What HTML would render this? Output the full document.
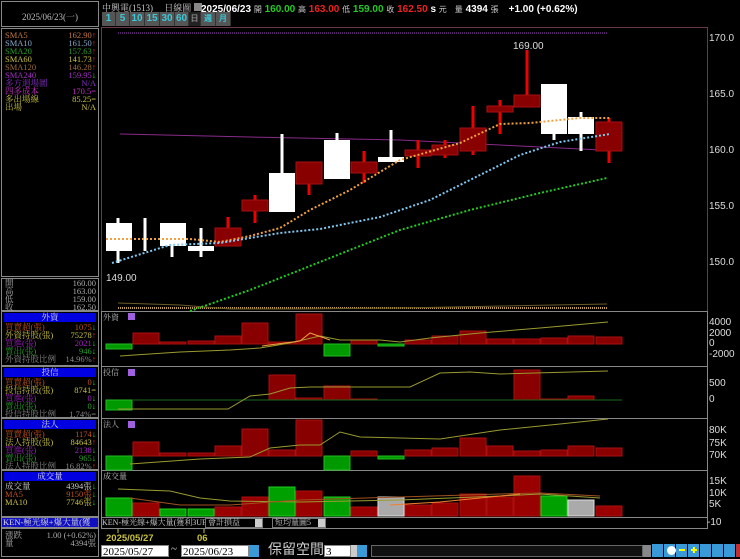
<!DOCTYPE html>
<html><head><meta charset="utf-8">
<style>
*{margin:0;padding:0;box-sizing:border-box}
body{width:740px;height:557px;background:#000;overflow:hidden;position:relative;font-family:"Liberation Serif","Noto Serif CJK SC","Noto Sans CJK TC",serif;font-size:9px;color:#ccc}
.a{position:absolute;white-space:nowrap}
.lp{position:absolute;left:1px;width:98px;border:1px solid #888}
.row{position:absolute;left:3px;right:2px;height:8px;line-height:8px;font-size:8.5px}
.row span{position:absolute;right:0}
.hd{position:absolute;left:2px;right:2px;height:9px;background:#0000e0;color:#ddd;text-align:center;line-height:9px;font-size:8.5px}
.b{position:absolute;top:12px;height:14px;background:#555;color:#3cc8d8;font:bold 10px "Liberation Sans",sans-serif;text-align:center;line-height:14px;border-right:1px solid #333}
.ax{position:absolute;left:709px;font:10px "Liberation Sans",sans-serif;color:#ddd;line-height:10px}
.s{font-family:"Liberation Sans",sans-serif}
.in{position:absolute;top:545px;height:12px;background:#fff;color:#000;font-size:11px;line-height:12px;padding-left:1px;border:1px solid #888}
.ic{position:absolute;top:544px;width:11px;height:13px;background:#3a9ad8}
</style></head><body>

<div class="lp" style="top:1px;height:26px;background:#000"><div class="a" style="left:20px;top:8px;color:#bbb">2025/06/23(一)</div></div>
<div class="lp" style="top:28px;height:249px">
<div class="row" style="top:2px;color:#c07a40">SMA5<span>162.90<b style="color:#f22">↑</b></span></div>
<div class="row" style="top:10px;color:#88aacc">SMA10<span>161.50<b style="color:#f22">↑</b></span></div>
<div class="row" style="top:18px;color:#2a9a2a">SMA20<span>157.63<b style="color:#f22">↑</b></span></div>
<div class="row" style="top:26px;color:#c8c040">SMA60<span>141.73<b style="color:#f22">↑</b></span></div>
<div class="row" style="top:34px;color:#9a6a3a">SMA120<span>146.28<b style="color:#f22">↑</b></span></div>
<div class="row" style="top:42px;color:#a030c0">SMA240<span>159.95<b style="color:#2d2">↓</b></span></div>
<div class="row" style="top:50px;color:#8030c0">多方迴場圖<span>N/A</span></div>
<div class="row" style="top:58px;color:#c030c0">四多成本<span>170.5=</span></div>
<div class="row" style="top:66px;color:#c8c040">多出場線<span>85.25=</span></div>
<div class="row" style="top:74px;color:#c8c040">出場<span>N/A</span></div>
</div>
<div class="lp" style="top:278px;height:33px;color:#aaa">
<div class="row" style="top:0">開<span>160.00</span></div>
<div class="row" style="top:8px">高<span>163.00</span></div>
<div class="row" style="top:16px">低<span>159.00</span></div>
<div class="row" style="top:24px">收<span>162.50</span></div>
</div>
<div class="lp" style="top:311px;height:55px">
<div class="hd" style="top:1px">外資</div>
<div class="row" style="top:11px;color:#c05020">買賣超(張)<span>1075<b style="color:#2d2">↓</b></span></div>
<div class="row" style="top:19px;color:#c8c040">外資持股(張)<span>75278<b style="color:#f22">↑</b></span></div>
<div class="row" style="top:27px;color:#a020c0">買進(張)<span>2021<b style="color:#2d2">↓</b></span></div>
<div class="row" style="top:35px;color:#2a9a2a">賣出(張)<span>946<b style="color:#2d2">↓</b></span></div>
<div class="row" style="top:43px;color:#888">外資持股比例<span>14.96%<b style="color:#f22">↑</b></span></div>
</div>
<div class="lp" style="top:366px;height:52px">
<div class="hd" style="top:1px">投信</div>
<div class="row" style="top:11px;color:#c05020">買賣超(張)<span>0<b style="color:#2d2">↓</b></span></div>
<div class="row" style="top:19px;color:#c8c040">投信持股(張)<span>8741=</span></div>
<div class="row" style="top:27px;color:#a020c0">買進(張)<span>0<b style="color:#2d2">↓</b></span></div>
<div class="row" style="top:35px;color:#2a9a2a">賣出(張)<span>0<b style="color:#2d2">↓</b></span></div>
<div class="row" style="top:43px;color:#888">投信持股比例<span>1.74%=</span></div>
</div>
<div class="lp" style="top:418px;height:52px">
<div class="hd" style="top:1px">法人</div>
<div class="row" style="top:11px;color:#c05020">買賣超(張)<span>1174<b style="color:#2d2">↓</b></span></div>
<div class="row" style="top:19px;color:#c8c040">法人持股(張)<span>84643<b style="color:#f22">↑</b></span></div>
<div class="row" style="top:27px;color:#a020c0">買進(張)<span>2138<b style="color:#2d2">↓</b></span></div>
<div class="row" style="top:35px;color:#2a9a2a">賣出(張)<span>965<b style="color:#2d2">↓</b></span></div>
<div class="row" style="top:43px;color:#888">法人持股比例<span>16.82%<b style="color:#f22">↑</b></span></div>
</div>
<div class="lp" style="top:470px;height:47px">
<div class="hd" style="top:1px">成交量</div>
<div class="row" style="top:11px;color:#ccc">成交量<span>4394張<b style="color:#2d2">↓</b></span></div>
<div class="row" style="top:19px;color:#c05020">MA5<span>9150張<b style="color:#2d2">↓</b></span></div>
<div class="row" style="top:27px;color:#c8c040">MA10<span>7746張<b style="color:#2d2">↓</b></span></div>
</div>
<div class="lp" style="top:517px;height:11px;background:#1010c0;color:#ddd;font-size:8.5px;line-height:9px;padding-left:1px;overflow:hidden">KEN-極光線+爆大量(獲利3UP)</div>
<div class="lp" style="top:528px;height:29px;color:#aaa">
<div class="row" style="top:2px">漲跌<span>1.00 (+0.62%)</span></div>
<div class="row" style="top:10px">量<span>4394張</span></div>
</div>

<div class="a" style="left:102px;top:1px;color:#ccc;font-size:9px">中興電(1513)　 日線圖 <span style="background:#888;display:inline-block;width:8px;height:8px"></span></div>
<div class="a s" style="left:201px;top:0;font-size:10px;font-weight:bold;color:#fff">2025/06/23 <span style="font-weight:normal;font-size:8px;color:#ccc;font-family:serif">開</span> <span style="color:#2c2">160.00</span> <span style="font-weight:normal;font-size:8px;color:#ccc;font-family:serif">高</span> <span style="color:#e22">163.00</span> <span style="font-weight:normal;font-size:8px;color:#ccc;font-family:serif">低</span> <span style="color:#2c2">159.00</span> <span style="font-weight:normal;font-size:8px;color:#ccc;font-family:serif">收</span> <span style="color:#e22">162.50</span> s <span style="font-weight:normal;font-size:8px;color:#ccc;font-family:serif">元　量</span> 4394 <span style="font-weight:normal;font-size:8px;color:#ccc;font-family:serif">張</span>　+1.00 (+0.62%)</div>
<div class="b" style="left:102px;width:14px">1</div>
<div class="b" style="left:116px;width:14px">5</div>
<div class="b" style="left:130px;width:15px">10</div>
<div class="b" style="left:145px;width:15px">15</div>
<div class="b" style="left:160px;width:15px">30</div>
<div class="b" style="left:175px;width:14px">60</div>
<div class="b" style="left:189px;width:12px;background:#222;color:#888;font-size:8px">日</div>
<div class="b" style="left:201px;width:15px;font-size:8px">週</div>
<div class="b" style="left:216px;width:15px;font-size:8px">月</div>

<svg class="a" style="left:0;top:0" width="740" height="557">
<g fill="none">
<rect x="101.5" y="27.5" width="606" height="284" stroke="#6a3848"/>
<rect x="101.5" y="311.5" width="606" height="55" stroke="#888"/>
<rect x="101.5" y="366.5" width="606" height="52" stroke="#888"/>
<rect x="101.5" y="418.5" width="606" height="52" stroke="#888"/>
<rect x="101.5" y="470.5" width="606" height="47" stroke="#888"/>
<rect x="101.5" y="517.5" width="606" height="11" stroke="#888"/>
<line x1="118" y1="33" x2="608" y2="33" stroke="#a040c0" stroke-dasharray="1 1"/>
<polyline points="120,134 250,137 400,140 500,145 560,148 622,151" stroke="#8a2a8a"/>
<polyline points="118,308 607,308" stroke="#c0a040" stroke-width="2" stroke-dasharray="1 1"/>
<polyline points="118,303 180,305 230,309 300,309 400,308 607,304" stroke="#6a5a2a"/>
</g>
<g fill="#fff">
<rect x="116.5" y="218" width="3" height="45"/><rect x="106" y="223" width="26" height="28"/>
<rect x="143.5" y="218" width="3" height="33"/>
<rect x="170.5" y="223" width="3" height="34"/><rect x="160" y="223" width="26" height="23"/>
<rect x="199.5" y="228" width="3" height="29"/><rect x="188" y="246" width="26" height="5"/>
<rect x="280.5" y="134" width="3" height="78"/><rect x="269" y="173" width="26" height="39"/>
<rect x="335.5" y="133" width="3" height="46"/><rect x="324" y="140" width="26" height="39"/>
<rect x="389.5" y="130" width="3" height="32"/><rect x="378" y="157" width="26" height="5"/>
<rect x="552.5" y="130" width="3" height="10"/><rect x="541" y="84" width="26" height="50"/>
<rect x="579.5" y="112" width="3" height="39"/><rect x="568" y="117" width="26" height="17"/>
</g>
<g fill="#ee0000">
<rect x="226.5" y="217" width="3" height="29"/><rect x="253.5" y="195" width="3" height="28"/>
<rect x="307.5" y="162" width="3" height="33"/><rect x="362.5" y="151" width="3" height="32"/>
<rect x="416.5" y="140" width="3" height="28"/><rect x="443.5" y="140" width="3" height="18"/>
<rect x="471.5" y="106" width="3" height="49"/><rect x="498.5" y="100" width="3" height="34"/>
<rect x="525.5" y="50" width="3" height="45"/><rect x="607.5" y="118" width="3" height="45"/>
</g>
<g fill="#880000" stroke="#aa1010" stroke-width="1">
<rect x="215" y="228" width="26" height="18"/><rect x="242" y="200" width="26" height="11"/>
<rect x="296" y="162" width="26" height="22"/><rect x="351" y="162" width="26" height="11"/>
<rect x="405" y="150" width="26" height="6"/><rect x="432" y="145" width="26" height="10"/>
<rect x="460" y="128" width="26" height="23"/><rect x="487" y="106" width="26" height="6"/>
<rect x="514" y="95" width="26" height="12"/><rect x="596" y="122" width="26" height="29"/>
</g>
<g fill="none" stroke-width="2" stroke-dasharray="2 2">
<polyline stroke="#f0a040" points="106,239 190,239 220,242 250,236 280,228 310,210 350,190 400,160 460,143 500,124 530,123 580,118 610,118"/>
<polyline stroke="#80c8f0" points="112,263 170,245 220,243 280,233 320,229 380,217 430,200 470,180 520,155 560,142 610,134"/>
<polyline stroke="#22cc22" points="190,311 250,290 320,262 400,230 470,210 540,193 607,178"/>
</g>
<text x="513" y="49" fill="#ddd" font-family="Liberation Sans" font-size="10">169.00</text>
<text x="106" y="281" fill="#ddd" font-family="Liberation Sans" font-size="10">149.00</text>

<g fill="#880000" stroke="#aa1010">
<rect x="133" y="333" width="26" height="11"/><rect x="160" y="342" width="26" height="2"/><rect x="188" y="341" width="26" height="3"/>
<rect x="215" y="336" width="26" height="8"/><rect x="242" y="323" width="26" height="21"/><rect x="269" y="342" width="26" height="2"/>
<rect x="296" y="314" width="26" height="30"/><rect x="351" y="340" width="26" height="4"/><rect x="405" y="340" width="26" height="4"/>
<rect x="432" y="336" width="26" height="8"/><rect x="460" y="331" width="26" height="13"/><rect x="487" y="339" width="26" height="5"/>
<rect x="514" y="339" width="26" height="5"/><rect x="541" y="338" width="26" height="6"/><rect x="568" y="336" width="26" height="8"/><rect x="596" y="337" width="26" height="7"/>
</g>
<g fill="#009900" stroke="#22bb22">
<rect x="106" y="344" width="26" height="5"/><rect x="324" y="344" width="26" height="12"/><rect x="378" y="344" width="26" height="2"/>
</g>
<polyline fill="none" stroke="#9a9a30" points="120,356 180,352 230,350 260,348 290,343 320,336 340,340 380,340 400,342 430,338 480,333 540,328 608,322"/>
<polyline fill="none" stroke="#f0a040" points="262,346 300,341 310,333 330,340"/>
<g fill="#880000" stroke="#aa1010">
<rect x="269" y="375" width="26" height="25"/><rect x="296" y="398" width="26" height="2"/><rect x="324" y="386" width="26" height="14"/>
<rect x="351" y="399" width="26" height="1"/><rect x="514" y="370" width="26" height="30"/><rect x="541" y="399" width="26" height="1"/><rect x="568" y="396" width="26" height="4"/>
</g>
<rect x="106" y="400" width="26" height="10" fill="#009900" stroke="#22bb22"/>
<line x1="132" y1="400" x2="622" y2="400" stroke="#1a6a1a"/>
<polyline fill="none" stroke="#9a9a30" points="118,409 228,409 250,396 270,394 290,388 310,387 400,387 410,387 440,373 470,372 500,374 608,371"/>
<g fill="#880000" stroke="#aa1010">
<rect x="133" y="442" width="26" height="14"/><rect x="160" y="453" width="26" height="3"/><rect x="188" y="453" width="26" height="3"/>
<rect x="215" y="446" width="26" height="10"/><rect x="242" y="429" width="26" height="27"/><rect x="269" y="450" width="26" height="6"/>
<rect x="296" y="420" width="26" height="36"/><rect x="351" y="451" width="26" height="5"/><rect x="405" y="450" width="26" height="6"/>
<rect x="432" y="448" width="26" height="8"/><rect x="460" y="438" width="26" height="18"/><rect x="487" y="446" width="26" height="10"/>
<rect x="514" y="451" width="26" height="5"/><rect x="541" y="450" width="26" height="6"/><rect x="568" y="446" width="26" height="10"/><rect x="596" y="448" width="26" height="8"/>
</g>
<g fill="#009900" stroke="#22bb22">
<rect x="106" y="456" width="26" height="14"/><rect x="324" y="456" width="26" height="14"/><rect x="378" y="456" width="26" height="3"/>
</g>
<polyline fill="none" stroke="#9a9a30" points="130,464 200,459 250,457 270,448 300,445 320,445 340,432 360,437 400,438 440,439 500,430 560,424 608,419"/>
<g fill="#990000" stroke="#aa1010">
<rect x="133" y="503" width="26" height="13"/><rect x="215" y="507" width="26" height="9"/><rect x="242" y="497" width="26" height="19"/>
<rect x="296" y="491" width="26" height="25"/><rect x="351" y="507" width="26" height="9"/><rect x="405" y="505" width="26" height="11"/>
<rect x="432" y="503" width="26" height="13"/><rect x="460" y="494" width="26" height="22"/><rect x="487" y="497" width="26" height="19"/>
<rect x="514" y="476" width="26" height="40"/><rect x="596" y="506" width="26" height="10"/>
</g>
<g fill="#00a000" stroke="#22cc22">
<rect x="106" y="498" width="26" height="18"/><rect x="160" y="509" width="26" height="7"/><rect x="188" y="509" width="26" height="7"/>
<rect x="269" y="487" width="26" height="29"/><rect x="324" y="497" width="26" height="19"/><rect x="541" y="496" width="26" height="20"/>
</g>
<g fill="#aaa" stroke="#ddd"><rect x="378" y="497" width="26" height="19"/><rect x="568" y="500" width="26" height="16"/></g>
<polyline fill="none" stroke="#9a9a30" points="118,489 170,491 200,498 230,501 300,502 400,500 500,496 540,494 600,498"/>
<polyline fill="none" stroke="#a05020" points="130,498 180,505 230,505 300,500 400,497 500,494 540,493 600,496"/>
<polyline fill="none" stroke="#f08030" points="390,505 440,502 500,496 520,494"/>
<rect x="128" y="313" width="7" height="7" fill="#a060e0"/><rect x="128" y="369" width="7" height="7" fill="#a060e0"/><rect x="128" y="421" width="7" height="7" fill="#a060e0"/>
<line x1="118" y1="529" x2="118" y2="533" stroke="#c8c040"/><line x1="204" y1="529" x2="204" y2="533" stroke="#c8c040"/>
</svg>

<div class="a" style="left:103px;top:312px;font-size:8px;color:#bbb">外資</div>
<div class="a" style="left:103px;top:367px;font-size:8px;color:#bbb">投信</div>
<div class="a" style="left:103px;top:419px;font-size:8px;color:#bbb">法人</div>
<div class="a" style="left:103px;top:471px;font-size:8px;color:#bbb">成交量</div>

<div class="ax" style="top:34px">170.0</div>
<div class="ax" style="top:90px">165.0</div>
<div class="ax" style="top:146px">160.0</div>
<div class="ax" style="top:202px">155.0</div>
<div class="ax" style="top:258px">150.0</div>
<div class="ax" style="top:318px">4000</div>
<div class="ax" style="top:329px">2000</div>
<div class="ax" style="top:339px">0</div>
<div class="ax" style="top:350px">-2000</div>
<div class="ax" style="top:379px">500</div>
<div class="ax" style="top:395px">0</div>
<div class="ax" style="top:426px">80K</div>
<div class="ax" style="top:439px">75K</div>
<div class="ax" style="top:451px">70K</div>
<div class="ax" style="top:477px">15K</div>
<div class="ax" style="top:489px">10K</div>
<div class="ax" style="top:500px">5K</div>
<div class="ax" style="left:707px;top:518px">-10</div>

<div class="a" style="left:102px;top:518px;font-size:8px;line-height:10px;color:#ccc">KEN-極光線+爆大量(獲利3UP)</div>
<div class="a" style="left:205px;top:518px;width:58px;height:10px;border:1px solid #777;font-size:8px;line-height:8px;color:#ccc;padding-left:2px;background:#000">會計損益<span style="position:absolute;right:0;top:0;width:7px;height:8px;background:#ccc"></span></div>
<div class="a" style="left:272px;top:518px;width:54px;height:10px;border:1px solid #777;font-size:8px;line-height:8px;color:#ccc;padding-left:2px">短均量圖5<span style="position:absolute;right:0;top:0;width:7px;height:8px;background:#ccc"></span></div>
<div class="a s" style="left:106px;top:533px;font-size:9.5px;font-weight:bold;color:#c8c040">2025/05/27</div>
<div class="a s" style="left:197px;top:533px;font-size:9.5px;font-weight:bold;color:#c8c040">06</div>

<div class="in" style="left:101px;width:68px">2025/05/27</div>
<div class="a" style="left:171px;top:543px;font-size:11px;color:#ddd">~</div>
<div class="in" style="left:181px;width:68px">2025/06/23</div>
<div class="a" style="left:249px;top:545px;width:10px;height:12px;background:#3a9ad8"></div>
<div class="a" style="left:268px;top:542px;font-size:14px;color:#ccc;font-family:'Noto Sans CJK TC',sans-serif;line-height:15px">保留空間</div>
<div class="in" style="left:324px;width:27px">3</div>
<div class="a" style="left:351px;top:545px;width:6px;height:12px;background:#ccc"></div>
<div class="a" style="left:357px;top:545px;width:10px;height:12px;background:#3a9ad8"></div>
<div class="a" style="left:371px;top:545px;width:272px;height:12px;background:#111;border:1px solid #666"></div>
<div class="a" style="left:643px;top:545px;width:8px;height:12px;background:#888"></div>
<div class="ic" style="left:652px"></div><div class="ic" style="left:664px"></div><div class="ic" style="left:676px"></div><div class="ic" style="left:688px"></div><div class="ic" style="left:700px"></div><div class="ic" style="left:712px"></div><div class="ic" style="left:724px"></div><div class="ic" style="left:736px;background:#c03030"></div>
<div class="a" style="left:667px;top:546px;width:9px;height:9px;border-radius:50%;background:#fff"></div>
<div class="a" style="left:679px;top:549px;width:6px;height:2px;background:#ff0"></div>
<div class="a" style="left:691px;top:549px;width:6px;height:2px;background:#ff0"></div><div class="a" style="left:693px;top:547px;width:2px;height:6px;background:#ff0"></div>
</body></html>
